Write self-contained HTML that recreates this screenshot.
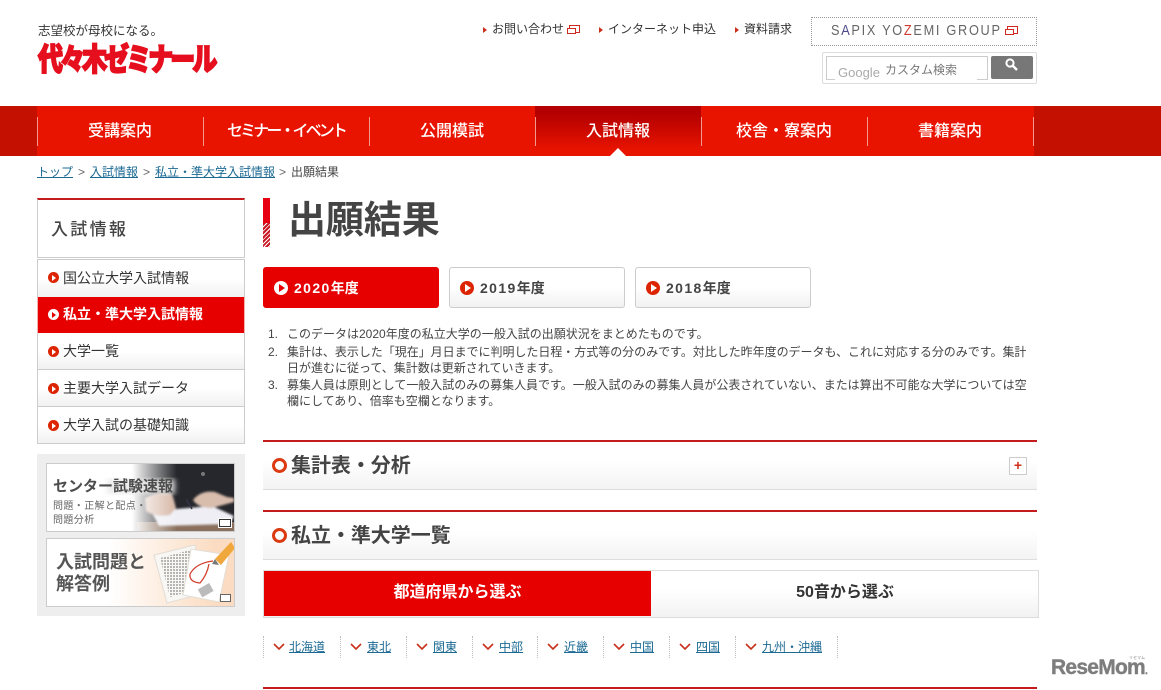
<!DOCTYPE html>
<html lang="ja"><head><meta charset="utf-8"><title>出願結果</title>
<style>
html,body{margin:0;padding:0;background:#fff}
body{width:1161px;height:690px;position:relative;overflow:hidden;font-family:"Liberation Sans","Noto Sans CJK JP",sans-serif;color:#333;font-size:12px}
.a,.t{position:absolute}
.t{white-space:nowrap;line-height:1}
a{color:#1c6a94;text-decoration:underline}
.nav{color:#fff;font-weight:500;font-size:16px;text-align:center;width:166px;top:124px;letter-spacing:0}
.sep{position:absolute;top:117px;width:1px;height:29px;background:#f39a8e}
.side{position:absolute;left:37px;width:206px;border:1px solid #ccc;border-top:0;background:linear-gradient(#fff 50%,#f1f1f1);box-sizing:content-box}
.ic{position:absolute;width:11px;height:11px;border-radius:50%;background:#dc2400}
.ic:after{content:"";position:absolute;left:4px;top:2.5px;border-left:4.5px solid #fff;border-top:3px solid transparent;border-bottom:3px solid transparent}
.ic.w{background:#fff}.ic.w:after{border-left-color:#e60000}
.side span{position:absolute;left:25px;top:11px;font-size:14px;line-height:1;white-space:nowrap}
.tab{position:absolute;top:267px;width:174px;height:39px;border:1px solid #ccc;border-radius:3px;background:linear-gradient(#fff 50%,#f1f1f1);font-weight:700;font-size:14px;color:#444}
.tab .ic{width:14px;height:14px;left:10px;top:13px}
.tab .ic:after{left:5px;top:3px;border-left-width:6px;border-top-width:4px;border-bottom-width:4px}
.tab span{position:absolute;left:30px;top:13px;line-height:1;white-space:nowrap}
.tab em{font-style:normal;letter-spacing:1.4px}
.sec{position:absolute;left:263px;width:774px;height:47px;border-top:2px solid #c41c1c;border-bottom:1px solid #ddd;background:linear-gradient(#fff 40%,#f3f3f3)}
.sec i{position:absolute;left:9px;top:16px;width:9px;height:9px;border:3.5px solid #dc3a10;border-radius:50%;background:#fff}
.sec b{position:absolute;left:28px;top:14px;font-size:20px;line-height:1;color:#444;white-space:nowrap;letter-spacing:-.05px}
.rg{position:absolute;top:636px;height:22px;border-left:1px dotted #bbb}
.rg svg{position:absolute;left:9px;top:7px}
.rg a{position:absolute;top:4px;font-size:12px;line-height:14px;white-space:nowrap}
.ext{position:absolute;width:9px;height:6px;border:1px solid #d02a20;background:#fff}
.ext:before{content:"";position:absolute;left:-3px;top:2px;width:7px;height:4px;border:1.5px solid #d02a20;background:#fff}
.li{font-size:12px;color:#444;letter-spacing:0}
.tri{position:absolute;width:0;height:0;border-left:4px solid #c8301c;border-top:3px solid transparent;border-bottom:3px solid transparent}
</style></head><body>

<div class="t" style="left:38px;top:25px;font-size:12.5px;color:#333">志望校が母校になる。</div>
<div class="t" style="left:38px;top:38px;font-size:25px;line-height:36px;font-weight:900;color:#e60f1e;-webkit-text-stroke:1.4px #e60f1e;letter-spacing:-2.95px;transform-origin:0 0;transform:scaleY(1.25)">代々木ゼミナール</div>

<div class="tri" style="left:483px;top:27px"></div><div class="t" style="left:492px;top:23px;font-size:12px;color:#333">お問い合わせ</div><div class="ext" style="left:569px;top:25px"></div>
<div class="tri" style="left:599px;top:27px"></div><div class="t" style="left:608px;top:23px;font-size:12px;color:#333">インターネット申込</div>
<div class="tri" style="left:735px;top:27px"></div><div class="t" style="left:744px;top:23px;font-size:12px;color:#333">資料請求</div>

<div class="a" style="left:811px;top:17px;width:224px;height:27px;border:1px dotted #999"></div>
<div class="t" style="left:831px;top:23px;font-size:15px;color:#666;letter-spacing:2px;transform-origin:0 0;transform:scaleX(.85)">S<span style="color:#4a4a8a">A</span>PIX YO<span style="color:#d0392b">Z</span>EMI GROUP</div><div class="ext" style="left:1007px;top:26px"></div>

<div class="a" style="left:822px;top:52px;width:213px;height:30px;border:1px solid #ddd;border-radius:2px"></div>
<div class="a" style="left:826px;top:56px;width:160px;height:22px;border:1px solid #ccc"></div>
<div class="a" style="left:835px;top:70px;width:142px;height:12px;background:#fff"></div>
<div class="t" style="left:838px;top:66px;font-size:13px;color:#aaa">Google</div>
<div class="t" style="left:885px;top:64px;font-size:12px;color:#777">カスタム検索</div>
<div class="a" style="left:991px;top:56px;width:42px;height:23px;background:#777;border-radius:2px">
<svg width="42" height="23" style="display:block"><circle cx="19" cy="7" r="3.6" fill="none" stroke="#fff" stroke-width="2"/><path d="M22 10l4 4" stroke="#fff" stroke-width="2.4"/></svg></div>

<div class="a" style="left:0;top:106px;width:1161px;height:50px;background:linear-gradient(90deg,#c41000 37px,#e91400 37px,#e91400 1034px,#c41000 1034px)"></div>
<div class="a" style="left:535px;top:106px;width:166px;height:50px;background:linear-gradient(#b40000 15%,#e91400 90%)"></div>
<div class="sep" style="left:37px"></div><div class="sep" style="left:203px"></div><div class="sep" style="left:369px"></div><div class="sep" style="left:535px"></div><div class="sep" style="left:701px"></div><div class="sep" style="left:867px"></div><div class="sep" style="left:1033px"></div>
<div class="t nav" style="left:37px">受講案内</div>
<div class="t nav" style="left:203px;letter-spacing:-2.9px">セミナー・イベント</div>
<div class="t nav" style="left:369px">公開模試</div>
<div class="t nav" style="left:535px">入試情報</div>
<div class="t nav" style="left:701px">校舎・寮案内</div>
<div class="t nav" style="left:867px">書籍案内</div>
<div class="a" style="left:610px;top:148px;width:0;height:0;border-left:8px solid transparent;border-right:8px solid transparent;border-bottom:8px solid #fff"></div>

<div class="t" style="left:37px;top:165px;font-size:12px;line-height:14px"><a>トップ</a></div>
<div class="t" style="left:78px;top:166px;font-size:12px;color:#666">&gt;</div>
<div class="t" style="left:90px;top:165px;font-size:12px;line-height:14px"><a>入試情報</a></div>
<div class="t" style="left:143px;top:166px;font-size:12px;color:#666">&gt;</div>
<div class="t" style="left:155px;top:165px;font-size:12px;line-height:14px"><a>私立・準大学入試情報</a></div>
<div class="t" style="left:279px;top:166px;font-size:12px;color:#666">&gt;</div>
<div class="t" style="left:291px;top:165px;font-size:12px;line-height:14px;color:#444">出願結果</div>

<div class="a" style="left:37px;top:198px;width:206px;height:57px;border:1px solid #ccc;border-top:2px solid #c41c1c"></div>
<div class="t" style="left:51px;top:221px;font-size:17px;font-weight:500;color:#444;letter-spacing:2.3px">入試情報</div>

<div class="side" style="top:259px;height:37px;border-top:1px solid #ccc"><i class="ic" style="left:10px;top:12px"></i><span>国公立大学入試情報</span></div>
<div class="side" style="top:297px;height:36px;background:#e60000;border-color:#f2b0a8;border-top:0"><i class="ic w" style="left:10px;top:12px"></i><span style="color:#fff;font-weight:700;top:10px">私立・準大学入試情報</span></div>
<div class="side" style="top:333px;height:36px"><i class="ic" style="left:10px;top:13px"></i><span>大学一覧</span></div>
<div class="side" style="top:370px;height:36px;border-top:0"><i class="ic" style="left:10px;top:13px"></i><span>主要大学入試データ</span></div>
<div class="side" style="top:406px;height:36px;border-top:1px solid #ccc"><i class="ic" style="left:10px;top:13px"></i><span>大学入試の基礎知識</span></div>

<div class="a" style="left:37px;top:454px;width:208px;height:162px;background:#eee"></div>
<div class="a" style="left:46px;top:463px;width:187px;height:67px;border:1px solid #ccc;background:#fff;overflow:hidden">
<svg class="a" style="left:0;top:0" width="187" height="67"><defs><linearGradient id="f" x1="0" x2="1"><stop offset="0" stop-color="#fff"/><stop offset="1" stop-color="#fff" stop-opacity="0"/></linearGradient><filter id="b"><feGaussianBlur stdDeviation="1"/></filter><filter id="c"><feGaussianBlur stdDeviation="3"/></filter></defs>
<rect x="85" y="0" width="102" height="67" fill="#26272c"/><rect x="90" y="58" width="97" height="9" fill="#8a6f5c"/>
<circle cx="156" cy="10" r="2" fill="#777"/>
<g filter="url(#b)"><path d="M104 47L165 42L187 52L183 60L112 62Z" fill="#eeeef4"/><path d="M98 34q14-8 27-4l4 14-6 7q-14 3-24-4z" fill="#d6b6a4"/><path d="M146 36q8-10 22-8l12 5 7 1v4l-22 6q-14 0-19-8z" fill="#d8bcac"/></g>
<path d="M139 35l6 10" stroke="#334" stroke-width="1.5"/>
<rect x="85" y="0" width="45" height="67" fill="url(#f)"/>
<rect x="60" y="15" width="68" height="15" fill="#e8e8e8" opacity=".85" filter="url(#c)"/></svg>
<div class="t" style="left:6px;top:15px;font-size:15px;font-weight:700;color:#4d4d4d;letter-spacing:0">センター試験速報</div>
<div class="t" style="left:6px;top:36px;font-size:10px;color:#666;letter-spacing:.4px;line-height:14px">問題・正解と配点・<br>問題分析</div>
<div class="a" style="left:172px;top:55px;width:10px;height:6px;border:1px solid #333;background:#fff;box-shadow:0 0 0 1px #fff"></div>
</div>
<div class="a" style="left:46px;top:538px;width:187px;height:67px;border:1px solid #ccc;background:linear-gradient(90deg,#fff 33%,#fbdcc2 90%);overflow:hidden">
<svg class="a" style="left:0;top:0" width="187" height="67"><defs><pattern id="p" width="3" height="3" patternUnits="userSpaceOnUse"><rect width="2" height="2" fill="#999"/></pattern></defs>
<path d="M107 16L148 6L158 54L120 64Z" fill="#f8f7f3" stroke="#e2ddd6"/><path d="M113 19L143 11L151 50L123 58Z" fill="url(#p)" opacity=".7"/>
<path d="M144 10L182 16L172 63L136 56Z" fill="#fff" stroke="#e2ddd6"/><path d="M166 22q-17 2-23 13q-1 8 10 9q7-8 9-19" fill="none" stroke="#d2402e" stroke-width="1.3"/>
<rect x="152" y="47" width="13" height="9" fill="#bbb" transform="rotate(-30 158 51)"/>
<path d="M168 20L184 3L188 9L174 26Z" fill="#f0a83c"/><path d="M168 20L165 25L172 26Z" fill="#777"/></svg>
<div class="t" style="left:9px;top:12px;font-size:18px;font-weight:700;color:#555;line-height:22px">入試問題と<br>解答例</div>
<div class="a" style="left:173px;top:55px;width:9px;height:6px;border:1px solid #666;background:#fff"></div>
</div>

<div class="a" style="left:263px;top:198px;width:7px;height:49px;background:repeating-linear-gradient(135deg,#c81a24 0 2px,#fff 2px 3px)"></div>
<div class="a" style="left:263px;top:198px;width:7px;height:25px;background:#e60012"></div>
<div class="t" style="left:288px;top:202px;font-size:38px;font-weight:700;color:#444;letter-spacing:-.1px">出願結果</div>

<div class="tab" style="left:263px;background:#e60000;border-color:#e60000;color:#fff"><i class="ic w"></i><span><em>2020</em>年度</span></div>
<div class="tab" style="left:449px"><i class="ic"></i><span><em>2019</em>年度</span></div>
<div class="tab" style="left:635px"><i class="ic"></i><span><em>2018</em>年度</span></div>

<div class="t li" style="left:268px;top:327px;line-height:14px">1.</div>
<div class="t li" style="left:287px;top:327px;line-height:14px">このデータは2020年度の私立大学の一般入試の出願状況をまとめたものです。</div>
<div class="t li" style="left:268px;top:345px;line-height:14px">2.</div>
<div class="t li" style="left:287px;top:345px;line-height:14px;letter-spacing:-.03px">集計は、表示した「現在」月日までに判明した日程・方式等の分のみです。対比した昨年度のデータも、これに対応する分のみです。集計</div>
<div class="t li" style="left:287px;top:361px;line-height:14px">日が進むに従って、集計数は更新されていきます。</div>
<div class="t li" style="left:268px;top:378px;line-height:14px">3.</div>
<div class="t li" style="left:287px;top:378px;line-height:14px;letter-spacing:-.03px">募集人員は原則として一般入試のみの募集人員です。一般入試のみの募集人員が公表されていない、または算出不可能な大学については空</div>
<div class="t li" style="left:287px;top:394px;line-height:14px">欄にしてあり、倍率も空欄となります。</div>

<div class="sec" style="top:440px"><i></i><b>集計表・分析</b>
<div class="a" style="left:746px;top:15px;width:16px;height:16px;border:1px solid #ccc;background:#fff;color:#d0301a;font-weight:700;font-size:14px;line-height:15px;text-align:center">+</div></div>
<div class="sec" style="top:510px"><i></i><b>私立・準大学一覧</b></div>

<div class="a" style="left:263px;top:570px;width:774px;height:46px;border:1px solid #ddd;background:linear-gradient(#fff 40%,#f2f2f2)"></div>
<div class="a" style="left:264px;top:571px;width:387px;height:45px;background:#e60000"></div>
<div class="t" style="left:264px;top:585px;width:387px;text-align:center;color:#fff;font-size:16px;font-weight:700">都道府県から選ぶ</div>
<div class="t" style="left:651px;top:585px;width:388px;text-align:center;color:#333;font-size:16px;font-weight:700">50音から選ぶ</div>

<div class="rg" style="left:263px"><svg width="12" height="8"><path d="M1 1l5 5 5-5" fill="none" stroke="#c8301c" stroke-width="1.6"/></svg><a style="left:25px">北海道</a></div>
<div class="rg" style="left:340px"><svg width="12" height="8"><path d="M1 1l5 5 5-5" fill="none" stroke="#c8301c" stroke-width="1.6"/></svg><a style="left:26px">東北</a></div>
<div class="rg" style="left:406px"><svg width="12" height="8"><path d="M1 1l5 5 5-5" fill="none" stroke="#c8301c" stroke-width="1.6"/></svg><a style="left:26px">関東</a></div>
<div class="rg" style="left:472px"><svg width="12" height="8"><path d="M1 1l5 5 5-5" fill="none" stroke="#c8301c" stroke-width="1.6"/></svg><a style="left:26px">中部</a></div>
<div class="rg" style="left:537px"><svg width="12" height="8"><path d="M1 1l5 5 5-5" fill="none" stroke="#c8301c" stroke-width="1.6"/></svg><a style="left:26px">近畿</a></div>
<div class="rg" style="left:603px"><svg width="12" height="8"><path d="M1 1l5 5 5-5" fill="none" stroke="#c8301c" stroke-width="1.6"/></svg><a style="left:26px">中国</a></div>
<div class="rg" style="left:669px"><svg width="12" height="8"><path d="M1 1l5 5 5-5" fill="none" stroke="#c8301c" stroke-width="1.6"/></svg><a style="left:26px">四国</a></div>
<div class="rg" style="left:735px"><svg width="12" height="8"><path d="M1 1l5 5 5-5" fill="none" stroke="#c8301c" stroke-width="1.6"/></svg><a style="left:26px">九州・沖縄</a></div>
<div class="rg" style="left:837px"></div>

<div class="a" style="left:263px;top:687px;width:774px;height:2px;background:#c41c1c"></div>

<div class="t" style="left:1051px;top:657px;font-size:21px;font-weight:700;color:#7d7d7d;letter-spacing:-.75px;-webkit-text-stroke:.4px #7d7d7d">ReseMom<span style="font-size:10px">.</span></div>
<div class="t" style="left:1129px;top:656px;font-size:4px;color:#888">リセマム</div>
</body></html>
